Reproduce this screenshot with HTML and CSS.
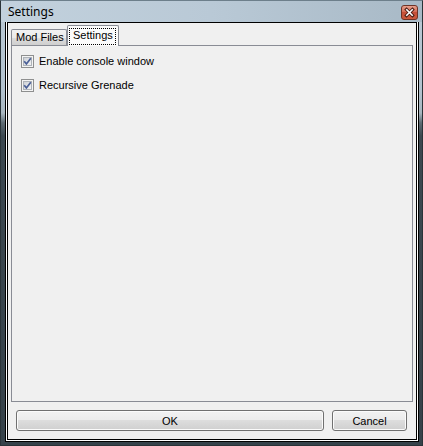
FILE: index.html
```html
<!DOCTYPE html>
<html>
<head>
<meta charset="utf-8">
<link rel="stylesheet" href="styles.css">
</head>
<body>
<div class="window">
  <div class="titlebar">
    <span class="title">Settings</span>
    <span class="close">
      <svg width="17" height="15" viewBox="0 0 17 15">
        <defs>
          <linearGradient id="cg" x1="0" y1="0" x2="0" y2="1">
            <stop offset="0" stop-color="#e9a592"/>
            <stop offset="0.45" stop-color="#d56c55"/>
            <stop offset="0.5" stop-color="#c64f37"/>
            <stop offset="1" stop-color="#cc5a3c"/>
          </linearGradient>
        </defs>
        <rect x="0.5" y="0.5" width="16" height="14" rx="2.5" fill="url(#cg)" stroke="#6e3326"/>
        <path d="M5.5 4.5 L11.5 10.5 M11.5 4.5 L5.5 10.5" stroke="#4a1d14" stroke-width="3.2" stroke-linecap="square"/>
        <path d="M5.8 4.8 L11.2 10.2 M11.2 4.8 L5.8 10.2" stroke="#ffffff" stroke-width="1.6" stroke-linecap="square"/>
      </svg>
    </span>
  </div>
  <div class="frame-body">
    <div class="client-ring">
      <div class="client">
        <div class="tabcontrol">
          <div class="tabstrip">
            <div class="tab">Mod Files</div>
            <div class="tab tab-selected"><span class="focus">Settings</span></div>
          </div>
          <div class="panel">
            <label class="check">
              <span class="box">
                <svg width="13" height="13" viewBox="0 0 13 13">
                  <defs>
                    <linearGradient id="bg1" x1="0" y1="0" x2="1" y2="1">
                      <stop offset="0" stop-color="#cbcfd5"/>
                      <stop offset="1" stop-color="#f6f6f6"/>
                    </linearGradient>
                  </defs>
                  <rect x="0.5" y="0.5" width="12" height="12" fill="#f4f4f4" stroke="#8e8f8f"/>
                  <rect x="2.5" y="2.5" width="8" height="8" fill="url(#bg1)" stroke="#aeb3b9"/>
                  <path d="M3.2 6.3 L5.4 8.9 L9.8 3.2" fill="none" stroke="#4a5f97" stroke-width="1.7"/>
                </svg>
              </span>
              <span class="label">Enable console window</span>
            </label>
            <label class="check">
              <span class="box">
                <svg width="13" height="13" viewBox="0 0 13 13">
                  <rect x="0.5" y="0.5" width="12" height="12" fill="#f4f4f4" stroke="#8e8f8f"/>
                  <rect x="2.5" y="2.5" width="8" height="8" fill="url(#bg1)" stroke="#aeb3b9"/>
                  <path d="M3.2 6.3 L5.4 8.9 L9.8 3.2" fill="none" stroke="#4a5f97" stroke-width="1.7"/>
                </svg>
              </span>
              <span class="label">Recursive Grenade</span>
            </label>
          </div>
        </div>
        <div class="buttons">
          <button class="btn btn-ok">OK</button>
          <button class="btn btn-cancel">Cancel</button>
        </div>
      </div>
    </div>
  </div>
</div>
</body>
</html>
```

FILE: styles.css
```css
html, body {
  margin: 0;
  padding: 0;
  background: #ffffff;
}

.window {
  box-sizing: border-box;
  width: 423px;
  height: 446px;
  border: 1px solid #2a3338;
  border-top-color: #6d7f8b;
  background:
    linear-gradient(to bottom,
      #bac9d5 0px,
      #b2c2ce 90px,
      #a8b6bf 112px,
      #5d6a72 122px,
      #3c4850 135px,
      #36424a 100%);
  display: flex;
  flex-direction: column;
  font-family: "Liberation Sans", Arial, sans-serif;
  font-size: 11px;
  color: #000;
}

.titlebar {
  height: 21px;
  display: flex;
  justify-content: space-between;
  align-items: flex-start;
  padding: 0 4px 0 7px;
  background: linear-gradient(to right, #c2d1dd 0%, #b9c9d6 50%, #a8b9c6 100%);
}

.title {
  font-family: "Noto Sans", "Open Sans", sans-serif;
  font-size: 12px;
  line-height: 21px;
  color: #000;
}

.close {
  margin-top: 4px;
  display: block;
  width: 17px;
  height: 15px;
}

.close svg {
  display: block;
}

.frame-body {
  flex: 1;
  display: flex;
  padding: 0 3px 3px 4px;
}

.client-ring {
  flex: 1;
  display: flex;
  border: 1px solid #000;
  border-top: none;
  background: #ffffff;
  padding: 0 1px 1px 1px;
}

.client {
  flex: 1;
  display: flex;
  flex-direction: column;
  border: 1px solid #000;
  background: #f0f0f0;
  padding: 2px 3px 8px 3px;
}

.tabcontrol {
  flex: 1;
  display: flex;
  flex-direction: column;
}

.tabstrip {
  height: 20px;
  display: flex;
  align-items: flex-end;
}

.tab {
  box-sizing: border-box;
  height: 16px;
  padding: 0 0 0 4px;
  border: 1px solid #898c95;
  border-bottom: none;
  border-radius: 2px 2px 0 0;
  background: linear-gradient(to bottom, #f2f2f2 0%, #ebebeb 50%, #dddddd 51%, #cfcfcf 100%);
  line-height: 15px;
  width: 56px;
  white-space: nowrap;
  overflow: hidden;
}

.tab-selected {
  position: relative;
  z-index: 1;
  height: 21px;
  width: 52px;
  margin-bottom: -1px;
  background: #fbfbfb;
  padding: 3px 0 0 2px;
  line-height: 13px;
  overflow: visible;
}

.focus {
  display: inline-block;
  outline: 1px dotted #000;
  outline-offset: 0;
  padding: 0 2px 2px 3px;
}

.panel {
  flex: 1;
  border: 1px solid #898c95;
  background: #f0f0f0;
  padding: 9px 9px;
  display: flex;
  flex-direction: column;
  gap: 11px;
}

.check {
  display: flex;
  align-items: center;
  height: 13px;
}

.box {
  display: block;
  width: 13px;
  height: 13px;
}

.box svg {
  display: block;
}

.label {
  margin-left: 5px;
  line-height: 13px;
  white-space: nowrap;
}

.buttons {
  display: flex;
  gap: 8px;
  margin-top: 8px;
  padding: 0 6px 0 5px;
}

.btn {
  box-sizing: border-box;
  height: 21px;
  border: 1px solid #707070;
  border-radius: 3px;
  background: linear-gradient(to bottom, #f2f2f2 0%, #ebebeb 50%, #dddddd 50%, #cfcfcf 100%);
  box-shadow: inset 0 0 0 1px #fbfbfb;
  font-family: "Liberation Sans", Arial, sans-serif;
  font-size: 11px;
  color: #000;
  padding: 0;
  margin: 0;
}

.btn-ok {
  flex: 1;
}

.btn-cancel {
  width: 75px;
}
```
